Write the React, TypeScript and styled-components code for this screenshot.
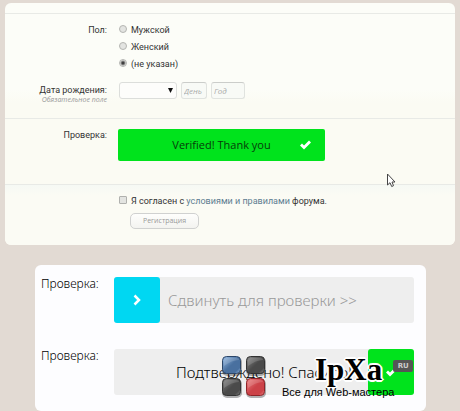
import React from "react";
import styled, { createGlobalStyle } from "styled-components";

const GlobalStyle = createGlobalStyle`
  * { box-sizing: border-box; }
  body {
    margin: 0;
    background: #e2dad3;
    font-family: "Open Sans", "Noto Sans", sans-serif;
    color: #333;
  }
`;

const Page = styled.main`
  padding: 3px 5px 0;
`;

const FormCard = styled.form`
  position: relative;
  overflow: hidden;
  padding-top: 10px;
  border-radius: 6px;
  background: linear-gradient(#fcfdf8 0, #fcfdf8 86px, #fbfbf3 100px, #fbfbf3 100%);
  font-family: Roboto, "Open Sans", sans-serif;
  font-size: 9px;
  line-height: 12px;
`;

const Section = styled.section<{ $height: number; $top: number; $tint?: boolean }>`
  display: flex;
  flex-direction: column;
  min-height: ${(p) => p.$height}px;
  padding-top: ${(p) => p.$top}px;
  border-top: 1px solid #e8eae6;
  background: ${(p) => (p.$tint ? "linear-gradient(#f6f9f4 0, #fbfbf4 10px)" : "none")};
`;

const Field = styled.div`
  display: grid;
  grid-template-columns: 102px 1fr;
  column-gap: 12px;
`;

const Caption = styled.div`
  text-align: right;
`;

const Hint = styled.div`
  color: #999;
  font-family: "Open Sans", sans-serif;
  font-size: 7px;
  line-height: 8px;
  font-style: italic;
  white-space: nowrap;
`;

const RadioList = styled.div`
  display: flex;
  flex-direction: column;
  gap: 5px;
  margin-bottom: 14px;
`;

const Choice = styled.label`
  display: flex;
  align-items: center;
  gap: 4px;
`;

const Radio = styled.input.attrs({ type: "radio" })`
  appearance: none;
  width: 8px;
  height: 8px;
  margin: 0 0 2px;
  border: 1px solid #b4b5b2;
  border-radius: 50%;
  background: #e3e4e1;
  &:checked {
    background: radial-gradient(circle, #333 0, #444 1px, #e3e4e1 3px);
  }
`;

const Checkbox = styled.input.attrs({ type: "checkbox" })`
  appearance: none;
  width: 8px;
  height: 8px;
  margin: 0 0 3px;
  border: 1px solid #b0b1ae;
  border-radius: 1px;
  background: #e3e4e1;
`;

const DateFields = styled.div`
  display: flex;
  gap: 4px;
  margin-top: -2px;
`;

const SelectFrame = styled.div`
  position: relative;
  width: 58px;
`;

const Month = styled.select`
  display: block;
  appearance: none;
  width: 100%;
  height: 17px;
  border: 1px solid #dcdedb;
  border-radius: 3px;
  background: #fdfdfb;
`;

const SelectArrow = styled.svg`
  position: absolute;
  right: 4px;
  top: 6px;
  pointer-events: none;
`;

const DateInput = styled.input<{ $width: number }>`
  width: ${(p) => p.$width}px;
  height: 17px;
  padding: 0 2px;
  border: 1px solid #e0e3df;
  border-top-color: #cbcdca;
  border-radius: 3px;
  background: #f8faf6;
  font: italic 8px "Open Sans", sans-serif;
  &::placeholder { color: #aaa; opacity: 1; }
`;

const Verified = styled.div`
  display: flex;
  align-items: center;
  justify-content: center;
  position: relative;
  width: 207px;
  height: 32px;
  margin-left: -1px;
  border-radius: 2px;
  background: #00e31c;
  color: #073b0a;
  font-family: "Open Sans", sans-serif;
  font-size: 11px;
  font-weight: 500;
`;

const VerifiedMark = styled.svg`
  position: absolute;
  right: 13px;
  top: 11px;
`;

const TermsLink = styled.a`
  color: #5d7d91;
  text-decoration: none;
`;

const Agreement = styled.div`
  margin-left: 114px;
`;

const Submit = styled.button`
  display: block;
  width: 69px;
  height: 16px;
  margin: 6px 0 0 11px;
  padding: 0 0 1px;
  border: 1px solid #d0d1d0;
  border-radius: 5px;
  background: linear-gradient(#fefefc, #f3f3f0);
  color: #999;
  font: 7px "Open Sans", sans-serif;
`;

const Cursor = styled.svg`
  position: absolute;
  left: 381px;
  top: 170px;
`;

const DemoCard = styled.section`
  position: relative;
  display: flex;
  flex-direction: column;
  gap: 26px;
  margin: 20px 29px 0 30px;
  padding: 12px 12px 16px 6px;
  border-radius: 6px;
  background: #fdfdff;
`;

const DemoRow = styled.div`
  display: grid;
  grid-template-columns: 61px 1fr;
  column-gap: 12px;
  color: #000;
  font-family: "Noto Sans", sans-serif;
  font-size: 12px;
  font-weight: 300;
  line-height: 14px;
`;

const Track = styled.div<{ $done?: boolean }>`
  position: relative;
  display: flex;
  align-items: center;
  justify-content: ${(p) => (p.$done ? "center" : "flex-start")};
  gap: 8px;
  height: 46px;
  border-radius: 3px;
  background: #eee;
  color: ${(p) => (p.$done ? "#000" : "#999")};
  font-size: 15px;
  white-space: nowrap;
`;

const Handle = styled.button`
  display: flex;
  align-items: center;
  justify-content: center;
  width: 46px;
  height: 46px;
  padding: 0;
  border: 0;
  border-radius: 3px;
  background: #00d7f2;
`;

const DoneHandle = styled(Handle)`
  position: absolute;
  right: 0;
  top: 0;
  background: #00e31c;
`;

const Watermark = styled.div`
  position: absolute;
  left: 187px;
  top: 90px;
  display: flex;
  gap: 13px;
  color: #000;
`;

const Brand = styled.div`
  display: flex;
  flex-direction: column;
`;

const BrandTop = styled.div`
  display: flex;
  align-items: flex-start;
  padding-left: 33px;
`;

const BrandName = styled.span`
  font: bold 31px/30px "Liberation Serif", serif;
  text-shadow: 2px 0 #fff, -2px 0 #fff, 0 2px #fff, 0 -2px #fff,
    1px 1px #fff, -1px -1px #fff, 1px -1px #fff, -1px 1px #fff, 0 0 3px #fff;
`;

const BrandZone = styled.span`
  width: 20px;
  height: 12px;
  margin: 5px 0 0 11px;
  border-radius: 2px;
  background: #555;
  color: #ccc;
  font: bold 7px/12px "DejaVu Sans", sans-serif;
  text-align: center;
`;

const Slogan = styled.span`
  font: 11px/14px "Liberation Sans", sans-serif;
  white-space: nowrap;
`;

const Tick = () => (
  <path d="M1 5.5 3 3.5 5 5.5 10 0.5 12 2.5 5 9.5Z" fill="#fff" />
);

const tiles = [
  { x: 0, y: 1, id: "blue", light: "#9cc0e8", mid: "#49709f", dark: "#2c4668" },
  { x: 24, y: 1, id: "gray", light: "#8b8b8b", mid: "#4a4a4a", dark: "#333" },
  { x: 0, y: 23, id: "coal", light: "#858585", mid: "#4a4a4a", dark: "#333" },
  { x: 24, y: 23, id: "red", light: "#ec8585", mid: "#cc4248", dark: "#8e2429" },
];

const TilesLogo = () => (
  <svg width="47" height="44" viewBox="0 0 47 44" aria-hidden="true">
    <defs>
      {tiles.map((t) => (
        <linearGradient key={t.id} id={t.id} x1="0" y1="0" x2="1" y2="1">
          <stop offset="0" stopColor={t.light} />
          <stop offset="0.5" stopColor={t.mid} />
          <stop offset="0.8" stopColor={t.mid} />
          <stop offset="1" stopColor={t.light} />
        </linearGradient>
      ))}
    </defs>
    {tiles.map((t) => (
      <g key={t.id}>
        <rect x={t.x} y={t.y + 1} width="20" height="19" rx="5" fill="#000" opacity="0.3" />
        <rect x={t.x + 0.5} y={t.y + 0.5} width="18" height="17" rx="4" fill={`url(#${t.id})`} stroke={t.dark} />
        <path
          d={`M${t.x + 2} ${t.y + 10}V${t.y + 5}q0-3 3-3h9q3 0 3 2q-7 0-15 6Z`}
          fill="#fff"
          opacity="0.15"
        />
      </g>
    ))}
  </svg>
);

export default function App() {
  return (
    <>
      <GlobalStyle />
      <Page>
        <FormCard onSubmit={(e) => e.preventDefault()}>
          <Section $height={105} $top={10}>
            <Field>
              <Caption id="gender">Пол:</Caption>
              <RadioList role="radiogroup" aria-labelledby="gender">
                <Choice><Radio name="gender" />Мужской</Choice>
                <Choice><Radio name="gender" />Женский</Choice>
                <Choice><Radio name="gender" defaultChecked />(не указан)</Choice>
              </RadioList>
            </Field>
            <Field>
              <Caption>
                <label htmlFor="month">Дата рождения:</label>
                <Hint>Обязательное поле</Hint>
              </Caption>
              <DateFields>
                <SelectFrame>
                  <Month id="month" defaultValue=""><option value="" /></Month>
                  <SelectArrow width="5" height="5" viewBox="0 0 5 5" aria-hidden="true">
                    <path d="M0 0H5L2.5 5Z" fill="#111" />
                  </SelectArrow>
                </SelectFrame>
                <DateInput $width={26} placeholder="День" aria-label="День" />
                <DateInput $width={34} placeholder="Год" aria-label="Год" />
              </DateFields>
            </Field>
          </Section>
          <Section $height={66} $top={10}>
            <Field>
              <Caption>Проверка:</Caption>
              <Verified role="status">
                Verified! Thank you
                <VerifiedMark width="13" height="10" viewBox="0 0 13 10" aria-hidden="true"><Tick /></VerifiedMark>
              </Verified>
            </Field>
          </Section>
          <Section $height={61} $top={10} $tint>
            <Agreement>
              <Choice>
                <Checkbox />
                <span>Я согласен с <TermsLink href="#terms">условиями и правилами</TermsLink> форума.</span>
              </Choice>
              <Submit type="submit">Регистрация</Submit>
            </Agreement>
          </Section>
          <Cursor width="10" height="15" viewBox="0 0 10 15" aria-hidden="true">
            <path d="M1.5 1V12L4 9.7 5.7 13.5 7.5 12.7 6 9H9Z" fill="#fff" stroke="#444" />
          </Cursor>
        </FormCard>
        <DemoCard>
          <DemoRow>
            <span>Проверка:</span>
            <Track>
              <Handle type="button" aria-label="Сдвинуть">
                <svg width="8" height="12" viewBox="0 0 8 12" aria-hidden="true">
                  <path d="M1.5 1.5 6 6 1.5 10.5" fill="none" stroke="#fff" strokeWidth="2.5" />
                </svg>
              </Handle>
              Сдвинуть для проверки &gt;&gt;
            </Track>
          </DemoRow>
          <DemoRow>
            <span>Проверка:</span>
            <Track $done>
              Подтверждено! Спасибо!
              <DoneHandle type="button" aria-label="Подтверждено">
                <svg width="13" height="10" viewBox="0 0 13 10" aria-hidden="true"><Tick /></svg>
              </DoneHandle>
            </Track>
          </DemoRow>
          <Watermark>
            <TilesLogo />
            <Brand>
              <BrandTop>
                <BrandName>IpXa</BrandName>
                <BrandZone>RU</BrandZone>
              </BrandTop>
              <Slogan>Все для Web-мастера</Slogan>
            </Brand>
          </Watermark>
        </DemoCard>
      </Page>
    </>
  );
}
